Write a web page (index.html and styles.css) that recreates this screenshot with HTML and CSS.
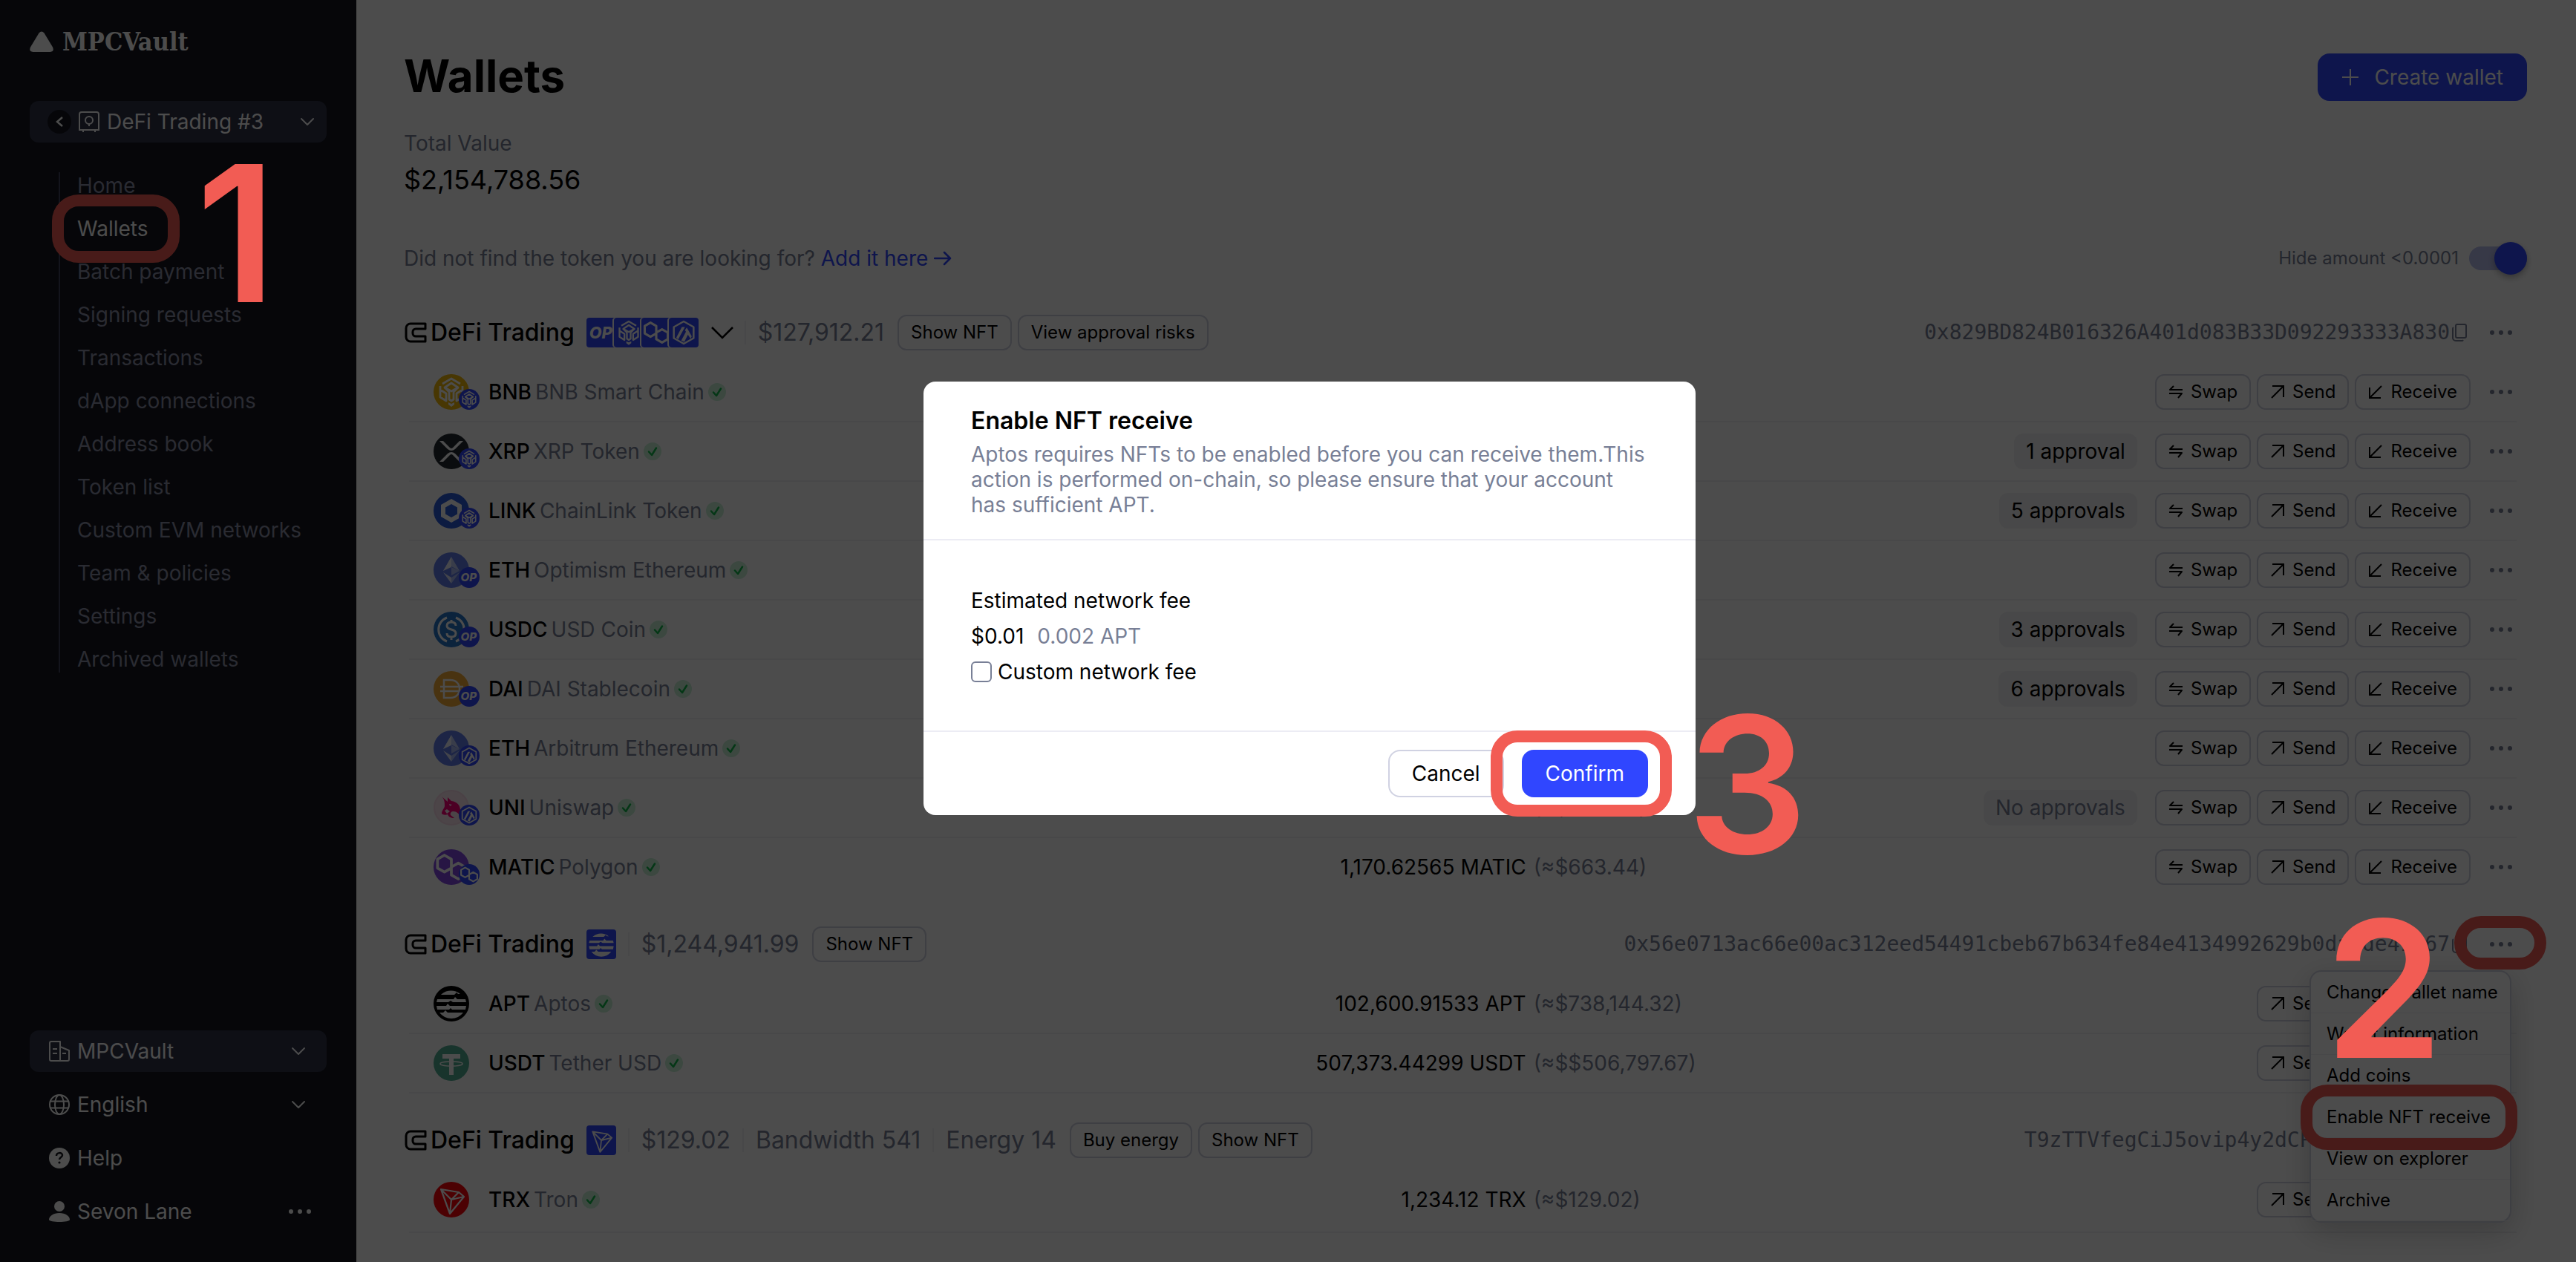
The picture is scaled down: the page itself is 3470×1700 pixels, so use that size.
FILE: index.html
```html
<!DOCTYPE html>
<html lang="en">
<head>
<meta charset="utf-8">
<meta name="viewport" content="width=device-width, initial-scale=1">
<title>Wallets – MPCVault</title>
<link rel="stylesheet" href="styles.css">
</head>
<body>
<svg class="sprite" aria-hidden="true">
  <symbol id="chev" viewBox="0 0 20 12"><path d="M2 2l8 8 8-8" fill="none" stroke="currentColor" stroke-width="2" stroke-linecap="round" stroke-linejoin="round"/></symbol>
  <symbol id="dots" viewBox="0 0 32 8"><circle cx="4" cy="4" r="3" fill="currentColor"/><circle cx="16" cy="4" r="3" fill="currentColor"/><circle cx="28" cy="4" r="3" fill="currentColor"/></symbol>
  <symbol id="purse" viewBox="0 0 30 28"><path d="M28 2H8a6 6 0 0 0-6 6v12a6 6 0 0 0 6 6h20v-7H15a4 4 0 0 1-4-4v-2a4 4 0 0 1 4-4h13z" fill="none" stroke="currentColor" stroke-width="3" stroke-linejoin="round"/></symbol>
  <symbol id="check" viewBox="0 0 24 24"><circle cx="12" cy="12" r="12" fill="#c8f2d8"/><path d="M7 12.500l4 4.500 6-9.500" fill="none" stroke="#12b84c" stroke-width="2.500" stroke-linecap="round" stroke-linejoin="round"/></symbol>
  <symbol id="swap" viewBox="0 0 20 20"><path d="M19 7H2l5-5M1 12h17l-5 6" fill="none" stroke="currentColor" stroke-width="2" stroke-linejoin="round"/></symbol>
  <symbol id="send" viewBox="0 0 20 20"><path d="M2 18L18 2M3 2h15v15" fill="none" stroke="currentColor" stroke-width="2"/></symbol>
  <symbol id="receive" viewBox="0 0 20 20"><path d="M18 2L2 18M2 4v14h15" fill="none" stroke="currentColor" stroke-width="2"/></symbol>
  <symbol id="copy" viewBox="0 0 22 26"><path d="M8 2h10a2 2 0 0 1 2 2v14a2 2 0 0 1-2 2H8a2 2 0 0 1-2-2V4a2 2 0 0 1 2-2zM3 6a2 2 0 0 0-1 2v12a4 4 0 0 0 4 4h8a2 2 0 0 0 2-1" fill="none" stroke="currentColor" stroke-width="2"/></symbol>

  <symbol id="g-bnb" viewBox="0 0 48 48"><g fill="none" stroke="currentColor" stroke-width="2.800" stroke-linejoin="round"><path d="M12 13l12-7 12 7"/><path d="M15 18l9-6 9 6-9 5z"/><path d="M9 16v15l8 5V26l-8-5M39 16v15l-8 5V26l8-5"/><path d="M15 18l6 6v10l3 2 3-2V24l6-6"/></g><path d="M20 38l4 2 4-2v3l-4 3-4-3z" fill="currentColor"/></symbol>
  <symbol id="g-poly" viewBox="6 6 36 36"><path d="M24 25l-7 4-7-4v-9l7-4 7 4v16l7 4 7-4v-8l-7-4-7 4" fill="none" stroke="currentColor" stroke-width="2.800" stroke-linejoin="round"/></symbol>
  <symbol id="g-arb" viewBox="0 0 48 48"><path d="M24 6l16 9v18l-16 9-16-9V15z" fill="none" stroke="currentColor" stroke-width="3" stroke-linejoin="round"/><path d="M12 32l9-17h5L15 35zM20 37l8-15 3 5-6 12zM29 16l8 14-2 4-9-14z" fill="currentColor"/></symbol>
  <symbol id="g-op" viewBox="0 0 48 48"><text x="23" y="33" text-anchor="middle" class="op-text" fill="currentColor">OP</text></symbol>
  <symbol id="g-apt" viewBox="0 0 48 48"><path d="M11 11a20 20 0 0 1 25 0l-3 0-2-2-3 3H10zM5 18h22l2-3 3 3h11l1 4H26l-3-2-3 2H4zM4 27h13l2-3 3 3h22l-1 5H25l-2-2-2 2H5zM8 36h5l3-3 3 3h21a20 20 0 0 1-32 0z" fill="currentColor"/></symbol>
  <symbol id="g-tron" viewBox="0 0 48 48"><path d="M10 10l24 4 7 6-19 23zM10 10l14 14 17-4M24 24l-2 19M24 24l10-10" fill="none" stroke="currentColor" stroke-width="2.200" stroke-linejoin="round"/></symbol>

  <symbol id="c-bnb" viewBox="0 0 48 48"><circle cx="24" cy="24" r="24" fill="#f0b90b"/></symbol>
  <symbol id="c-xrp" viewBox="0 0 48 48"><circle cx="24" cy="24" r="24" fill="#23292f"/><path d="M8 10h5l9 9q2 2 4 0l9-9h5L29 21q-5 4-10 0zM8 38h5l9-9q2-2 4 0l9 9h5L29 27q-5-4-10 0z" fill="#fff"/></symbol>
  <symbol id="c-link" viewBox="0 0 48 48"><circle cx="24" cy="24" r="24" fill="#2a5ada"/><path d="M24 8l14 8v16l-14 8-14-8V16zm0 7l-8 4.500v9l8 4.500 8-4.500v-9z" fill="#fff"/></symbol>
  <symbol id="c-eth" viewBox="0 0 48 48"><circle cx="24" cy="24" r="24" fill="#627eea"/><path d="M24 6v13l11 6z" fill="#fff" opacity=".6"/><path d="M24 6L13 25l11-6zM24 34v8l11-15zM24 31l11-6-11-5z" fill="#fff" opacity=".45"/><path d="M24 6L13 25l11-5zM24 42v-8l-11-7z" fill="#fff" opacity=".8"/></symbol>
  <symbol id="c-usdc" viewBox="0 0 48 48"><circle cx="24" cy="24" r="24" fill="#2775ca"/><path d="M18 8a17 17 0 0 0 0 32M30 8a17 17 0 0 1 0 32M30 19c0-3-2-5-6-5s-6 2-6 5 2 4 6 5 6 2 6 5-2 5-6 5-6-2-6-5M24 11v3M24 34v4" fill="none" stroke="#fff" stroke-width="3"/></symbol>
  <symbol id="c-dai" viewBox="0 0 48 48"><circle cx="24" cy="24" r="24" fill="#f5ac37"/><path d="M14 12h9c7 0 12 5 12 12s-5 12-12 12h-9zM9 21h31M9 27h31" fill="none" stroke="#fff" stroke-width="2.500"/></symbol>
  <symbol id="c-uni" viewBox="0 0 48 48"><circle cx="24" cy="24" r="23" fill="#fde8f2" stroke="#fbdcea" stroke-width="2"/><path d="M11 9l8 7 0-6 5 5c8 1 12 6 12 13v8c-2-4-5-7-9-7-3 0-5 2-4 5l5 4c-5 0-8-2-9-5-3 1-6 1-8-1 0-4 3-6 4-10 0-5 0-9-4-13z" fill="#ff007a"/><path d="M21 19l4 1-3 2zM15 28l3-2 4 3-4 3z" fill="#fde8f2"/></symbol>
  <symbol id="c-matic" viewBox="0 0 48 48"><circle cx="24" cy="24" r="24" fill="#8247e5"/></symbol>
  <symbol id="c-apt" viewBox="0 0 48 48"><circle cx="24" cy="24" r="24" fill="#000"/></symbol>
  <symbol id="c-usdt" viewBox="0 0 48 48"><circle cx="24" cy="24" r="24" fill="#53ae94"/><path d="M12 12h24v6h-9v22h-6V18h-9z" fill="#fff"/><ellipse cx="24" cy="25" rx="15" ry="3" fill="none" stroke="#fff" stroke-width="1.500"/></symbol>
  <symbol id="c-trx" viewBox="0 0 48 48"><circle cx="24" cy="24" r="24" fill="#ff060a"/></symbol>
</svg>

<div class="app">
  <aside class="sidebar">
    <a class="brand" href="#">
      <svg class="brand-mark" viewBox="0 0 32 28"><path d="M12.500 2.500Q16-1.500 19.500 2.500L31 21.500Q33.500 27.500 27.500 28H4.500Q-1.500 27.500 1 21.500z" fill="currentColor"/></svg>
      <span>MPCVault</span>
    </a>

    <div class="picker picker-vault">
      <button class="back" aria-label="Back"><svg viewBox="0 0 12 16"><path d="M10 2L3 8l7 6" fill="none" stroke="currentColor" stroke-width="2.500"/></svg></button>
      <svg class="picker-icon" viewBox="0 0 28 28"><g fill="none" stroke="currentColor" stroke-width="2"><path d="M4 1h20a3 3 0 0 1 3 3v21H1V4a3 3 0 0 1 3-3z"/><circle cx="14" cy="12" r="5"/><path d="M14 17v3"/></g><path d="M5 25h2v3H5zM21 25h2v3h-2z" fill="currentColor"/></svg>
      <select aria-label="Vault"><option>DeFi Trading #3</option></select>
      <svg class="chev"><use href="#chev"/></svg>
    </div>

    <nav class="nav" aria-label="Vault">
      <a href="#">Home</a>
      <a href="#" class="current" aria-current="page">Wallets<span class="ring ring-nav"></span><span class="step step-1">1</span></a>
      <a href="#">Batch payment</a>
      <a href="#">Signing requests</a>
      <a href="#">Transactions</a>
      <a href="#">dApp connections</a>
      <a href="#">Address book</a>
      <a href="#">Token list</a>
      <a href="#">Custom EVM networks</a>
      <a href="#">Team &amp; policies</a>
      <a href="#">Settings</a>
      <a href="#">Archived wallets</a>
    </nav>

    <div class="account">
      <div class="picker picker-org">
        <svg class="picker-icon" viewBox="0 0 28 28"><g fill="none" stroke="currentColor" stroke-width="2" stroke-linejoin="round"><path d="M3 1h12v26H3a2 2 0 0 1-2-2V3a2 2 0 0 1 2-2zM15 8l12 5v12a2 2 0 0 1-2 2H15"/><path d="M5 11h6M5 17h6M18 17h5"/></g></svg>
        <select aria-label="Organization"><option>MPCVault</option></select>
        <svg class="chev"><use href="#chev"/></svg>
      </div>
      <div class="picker">
        <svg class="picker-icon" viewBox="0 0 28 28"><g fill="none" stroke="currentColor" stroke-width="2"><circle cx="14" cy="14" r="13"/><ellipse cx="14" cy="14" rx="6" ry="13"/><path d="M2 9.500h24M2 18.500h24"/></g></svg>
        <select aria-label="Language"><option>English</option></select>
        <svg class="chev"><use href="#chev"/></svg>
      </div>
      <a class="picker" href="#">
        <svg class="picker-icon" viewBox="0 0 28 28"><circle cx="14" cy="14" r="14" fill="currentColor"/><path d="M10 11c0-5 8-5 8-1 0 3-4 3-4 6" fill="none" stroke="#14171e" stroke-width="2.500"/><circle cx="14" cy="20" r="1.600" fill="#14171e"/></svg>
        <span>Help</span>
      </a>
      <div class="picker">
        <svg class="picker-icon" viewBox="0 0 28 28"><circle cx="14" cy="7" r="7" fill="currentColor"/><path d="M14 16c8 0 14 4 14 9 0 4-28 4-28 0 0-5 6-9 14-9z" fill="currentColor"/></svg>
        <span class="grow">Sevon Lane</span>
        <button class="more-user" aria-label="Account menu"><svg class="dots"><use href="#dots"/></svg></button>
      </div>
    </div>
  </aside>

  <main class="main">
    <header class="title-row">
      <h1>Wallets</h1>
      <button class="primary create"><svg viewBox="0 0 24 24"><path d="M12 1v22M1 12h22" stroke="currentColor" stroke-width="2"/></svg>Create wallet</button>
    </header>
    <p class="total-label">Total Value</p>
    <p class="total">$2,154,788.56</p>

    <div class="tools">
      <p>Did not find the token you are looking for? <a href="#">Add it here <svg viewBox="0 0 24 20"><path d="M1 10h21M14 2l8 8-8 8" fill="none" stroke="currentColor" stroke-width="2.500" stroke-linecap="round" stroke-linejoin="round"/></svg></a></p>
      <label class="switch">Hide amount &lt;0.0001<input type="checkbox" role="switch" checked></label>
    </div>

    <div class="wallets">
      <section class="wallet">
        <header class="wallet-head">
          <svg class="purse"><use href="#purse"/></svg><h2>DeFi Trading</h2>
          <div class="chains">
            <svg class="chain"><use href="#g-op"/></svg>
            <svg class="chain"><use href="#g-bnb"/></svg>
            <svg class="chain"><use href="#g-poly"/></svg>
            <svg class="chain"><use href="#g-arb"/></svg>
          </div>
          <button class="expand" aria-label="Show networks"><svg viewBox="0 0 32 18"><path d="M2 2l14 14L30 2" fill="none" stroke="currentColor" stroke-width="2.500"/></svg></button>
          <span class="stat">$127,912.21</span>
          <button class="small">Show NFT</button>
          <button class="small">View approval risks</button>
          <span class="address">0x829BD824B016326A401d083B33D092293333A830</span>
          <button class="copy" aria-label="Copy address"><svg><use href="#copy"/></svg></button>
          <button class="more" aria-label="More"><svg class="dots"><use href="#dots"/></svg></button>
        </header>
        <table>
          <colgroup><col class="col-asset"><col class="col-fiat"><col class="col-actions"></colgroup>
          <tbody>
          <tr>
            <td><div class="asset"><span class="coin"><svg><use href="#c-bnb"/></svg><svg class="glyph"><use href="#g-bnb"/></svg><svg class="badge"><use href="#g-bnb"/></svg></span><b>BNB</b><span>BNB Smart Chain</span><svg class="ok"><use href="#check"/></svg></div></td>
            <td></td>
            <td><div class="actions"><button class="small"><svg><use href="#swap"/></svg>Swap</button><button class="small"><svg><use href="#send"/></svg>Send</button><button class="small"><svg><use href="#receive"/></svg>Receive</button><button class="more" aria-label="More"><svg class="dots"><use href="#dots"/></svg></button></div></td>
          </tr>
          <tr>
            <td><div class="asset"><span class="coin"><svg><use href="#c-xrp"/></svg><svg class="badge"><use href="#g-bnb"/></svg></span><b>XRP</b><span>XRP Token</span><svg class="ok"><use href="#check"/></svg></div></td>
            <td></td>
            <td><div class="actions"><span class="approvals">1 approval</span><button class="small"><svg><use href="#swap"/></svg>Swap</button><button class="small"><svg><use href="#send"/></svg>Send</button><button class="small"><svg><use href="#receive"/></svg>Receive</button><button class="more" aria-label="More"><svg class="dots"><use href="#dots"/></svg></button></div></td>
          </tr>
          <tr>
            <td><div class="asset"><span class="coin"><svg><use href="#c-link"/></svg><svg class="badge"><use href="#g-bnb"/></svg></span><b>LINK</b><span>ChainLink Token</span><svg class="ok"><use href="#check"/></svg></div></td>
            <td></td>
            <td><div class="actions"><span class="approvals">5 approvals</span><button class="small"><svg><use href="#swap"/></svg>Swap</button><button class="small"><svg><use href="#send"/></svg>Send</button><button class="small"><svg><use href="#receive"/></svg>Receive</button><button class="more" aria-label="More"><svg class="dots"><use href="#dots"/></svg></button></div></td>
          </tr>
          <tr>
            <td><div class="asset"><span class="coin"><svg><use href="#c-eth"/></svg><svg class="badge"><use href="#g-op"/></svg></span><b>ETH</b><span>Optimism Ethereum</span><svg class="ok"><use href="#check"/></svg></div></td>
            <td></td>
            <td><div class="actions"><button class="small"><svg><use href="#swap"/></svg>Swap</button><button class="small"><svg><use href="#send"/></svg>Send</button><button class="small"><svg><use href="#receive"/></svg>Receive</button><button class="more" aria-label="More"><svg class="dots"><use href="#dots"/></svg></button></div></td>
          </tr>
          <tr>
            <td><div class="asset"><span class="coin"><svg><use href="#c-usdc"/></svg><svg class="badge"><use href="#g-op"/></svg></span><b>USDC</b><span>USD Coin</span><svg class="ok"><use href="#check"/></svg></div></td>
            <td></td>
            <td><div class="actions"><span class="approvals">3 approvals</span><button class="small"><svg><use href="#swap"/></svg>Swap</button><button class="small"><svg><use href="#send"/></svg>Send</button><button class="small"><svg><use href="#receive"/></svg>Receive</button><button class="more" aria-label="More"><svg class="dots"><use href="#dots"/></svg></button></div></td>
          </tr>
          <tr>
            <td><div class="asset"><span class="coin"><svg><use href="#c-dai"/></svg><svg class="badge"><use href="#g-op"/></svg></span><b>DAI</b><span>DAI Stablecoin</span><svg class="ok"><use href="#check"/></svg></div></td>
            <td></td>
            <td><div class="actions"><span class="approvals">6 approvals</span><button class="small"><svg><use href="#swap"/></svg>Swap</button><button class="small"><svg><use href="#send"/></svg>Send</button><button class="small"><svg><use href="#receive"/></svg>Receive</button><button class="more" aria-label="More"><svg class="dots"><use href="#dots"/></svg></button></div></td>
          </tr>
          <tr>
            <td><div class="asset"><span class="coin"><svg><use href="#c-eth"/></svg><svg class="badge"><use href="#g-arb"/></svg></span><b>ETH</b><span>Arbitrum Ethereum</span><svg class="ok"><use href="#check"/></svg></div></td>
            <td></td>
            <td><div class="actions"><button class="small"><svg><use href="#swap"/></svg>Swap</button><button class="small"><svg><use href="#send"/></svg>Send</button><button class="small"><svg><use href="#receive"/></svg>Receive</button><button class="more" aria-label="More"><svg class="dots"><use href="#dots"/></svg></button></div></td>
          </tr>
          <tr>
            <td><div class="asset"><span class="coin"><svg><use href="#c-uni"/></svg><svg class="badge"><use href="#g-arb"/></svg></span><b>UNI</b><span>Uniswap</span><svg class="ok"><use href="#check"/></svg><span class="amount">112 UNI</span></div></td>
            <td class="fiat">(≈$663.44)</td>
            <td><div class="actions"><span class="approvals none">No approvals</span><button class="small"><svg><use href="#swap"/></svg>Swap</button><button class="small"><svg><use href="#send"/></svg>Send</button><button class="small"><svg><use href="#receive"/></svg>Receive</button><button class="more" aria-label="More"><svg class="dots"><use href="#dots"/></svg></button></div></td>
          </tr>
          <tr class="no-line">
            <td><div class="asset"><span class="coin"><svg><use href="#c-matic"/></svg><svg class="glyph"><use href="#g-poly"/></svg><svg class="badge"><use href="#g-poly"/></svg></span><b>MATIC</b><span>Polygon</span><svg class="ok"><use href="#check"/></svg><span class="amount">1,170.62565 MATIC</span></div></td>
            <td class="fiat">(≈$663.44)</td>
            <td><div class="actions"><button class="small"><svg><use href="#swap"/></svg>Swap</button><button class="small"><svg><use href="#send"/></svg>Send</button><button class="small"><svg><use href="#receive"/></svg>Receive</button><button class="more" aria-label="More"><svg class="dots"><use href="#dots"/></svg></button></div></td>
          </tr>
          </tbody>
        </table>
      </section>

      <section class="wallet">
        <header class="wallet-head">
          <svg class="purse"><use href="#purse"/></svg><h2>DeFi Trading</h2>
          <div class="chains"><svg class="chain"><use href="#g-apt"/></svg></div>
          <span class="stat">$1,244,941.99</span>
          <button class="small">Show NFT</button>
          <span class="address">0x56e0713ac66e00ac312eed54491cbeb67b634fe84e4134992629b0da1de41567</span>
          <button class="copy" aria-label="Copy address"><svg><use href="#copy"/></svg></button>
          <div class="more-wrap">
            <button class="more" aria-label="More" aria-expanded="true"><svg class="dots"><use href="#dots"/></svg></button>
            <span class="ring ring-more"></span>
            <ul class="menu">
              <li><button>Change wallet name</button></li>
              <li><button>Wallet information</button></li>
              <li><button>Add coins</button></li>
              <li><button>Enable NFT receive</button><span class="ring ring-item"></span></li>
              <li><button>View on explorer</button></li>
              <li><button>Archive</button></li>
            </ul>
            <span class="step step-2">2</span>
          </div>
        </header>
        <table>
          <colgroup><col class="col-asset"><col class="col-fiat"><col class="col-actions"></colgroup>
          <tbody>
          <tr>
            <td><div class="asset"><span class="coin"><svg><use href="#c-apt"/></svg><svg class="glyph"><use href="#g-apt"/></svg></span><b>APT</b><span>Aptos</span><svg class="ok"><use href="#check"/></svg><span class="amount">102,600.91533 APT</span></div></td>
            <td class="fiat">(≈$738,144.32)</td>
            <td><div class="actions"><button class="small"><svg><use href="#send"/></svg>Send</button><button class="small"><svg><use href="#receive"/></svg>Receive</button><button class="more" aria-label="More"></button></div></td>
          </tr>
          <tr>
            <td><div class="asset"><span class="coin"><svg><use href="#c-usdt"/></svg></span><b>USDT</b><span>Tether USD</span><svg class="ok"><use href="#check"/></svg><span class="amount">507,373.44299 USDT</span></div></td>
            <td class="fiat">(≈$$506,797.67)</td>
            <td><div class="actions"><button class="small"><svg><use href="#send"/></svg>Send</button><button class="small"><svg><use href="#receive"/></svg>Receive</button><button class="more" aria-label="More"></button></div></td>
          </tr>
          </tbody>
        </table>
      </section>

      <section class="wallet">
        <header class="wallet-head">
          <svg class="purse"><use href="#purse"/></svg><h2>DeFi Trading</h2>
          <div class="chains"><svg class="chain"><use href="#g-tron"/></svg></div>
          <span class="stat">$129.02</span>
          <span class="stat">Bandwidth 541</span>
          <span class="stat">Energy 14</span>
          <button class="small">Buy energy</button>
          <button class="small">Show NFT</button>
          <span class="address">T9zTTVfegCiJ5ovip4y2dCP1mKq8sWz3Ha</span>
          <button class="copy" aria-label="Copy address"><svg><use href="#copy"/></svg></button>
          <button class="more" aria-label="More"></button>
        </header>
        <table>
          <colgroup><col class="col-asset"><col class="col-fiat"><col class="col-actions"></colgroup>
          <tbody>
          <tr class="last">
            <td><div class="asset"><span class="coin"><svg><use href="#c-trx"/></svg><svg class="glyph"><use href="#g-tron"/></svg></span><b>TRX</b><span>Tron</span><svg class="ok"><use href="#check"/></svg><span class="amount">1,234.12 TRX</span></div></td>
            <td class="fiat">(≈$129.02)</td>
            <td><div class="actions"><button class="small"><svg><use href="#send"/></svg>Send</button><button class="small"><svg><use href="#receive"/></svg>Receive</button><button class="more" aria-label="More"></button></div></td>
          </tr>
          </tbody>
        </table>
      </section>
    </div>
  </main>
</div>

<div class="backdrop">
  <div class="dialog" role="dialog" aria-modal="true" aria-labelledby="dialog-title">
    <header class="dialog-head">
      <h2 id="dialog-title">Enable NFT receive</h2>
      <p>Aptos requires NFTs to be enabled before you can receive them.This action is performed on-chain, so please ensure that your account has sufficient APT.</p>
    </header>
    <div class="dialog-body">
      <p>Estimated network fee</p>
      <p class="fee">$0.01<span>0.002 APT</span></p>
      <label class="custom"><input type="checkbox">Custom network fee</label>
    </div>
    <footer class="dialog-foot">
      <button class="secondary">Cancel</button>
      <div class="confirm-wrap">
        <button class="primary">Confirm</button>
        <span class="ring ring-confirm"></span>
      </div>
    </footer>
    <span class="step step-3">3</span>
  </div>
</div>
</body>
</html>
```
FILE: styles.css
```css
:root {
  --ink: #000;
  --muted: #787f96;
  --line: #f0f0f3;
  --border: #d0d2e2;
  --blue: #3046ff;
  --red: #f25c54;
  --side: #14171e;
  --side-box: #2f3249;
}

* { box-sizing: border-box; }

body {
  margin: 0;
  background: #fff;
  color: var(--ink);
  font: 400 28px/34px Inter, "Liberation Sans", sans-serif;
}

h1, h2, p, ul { margin: 0; padding: 0; }
a { color: inherit; text-decoration: none; }
svg { display: block; flex: none; overflow: hidden; }
button, select, input { font: inherit; color: inherit; margin: 0; }
button { border: 0; padding: 0; background: none; }
.sprite { display: none; }
.grow { flex: 1; }

.app { display: flex; min-height: 100vh; }

/* Sidebar */
.sidebar {
  flex: none;
  width: 480px;
  padding: 36px 40px 40px;
  display: flex;
  flex-direction: column;
  background: var(--side);
  color: #fff;
}
.brand {
  display: flex;
  align-items: center;
  gap: 12px;
  font: 700 34px/40px "DejaVu Serif Condensed", "DejaVu Serif", serif;
}
.brand-mark { width: 32px; height: 28px; }
.picker {
  display: flex;
  align-items: center;
  gap: 10px;
  height: 56px;
  padding: 0 20px 0 26px;
  border-radius: 12px;
}
.picker-vault { margin-top: 60px; padding: 0 16px 0 24px; background: var(--side-box); }
.picker-org { background: var(--side-box); }
.picker-icon { width: 28px; height: 28px; }
.picker select {
  flex: 1;
  min-width: 0;
  border: 0;
  padding: 0;
  appearance: none;
  background: none;
}
.picker .chev { width: 20px; height: 12px; margin-right: 8px; }
.picker-vault .chev { margin-right: 0; }
.back {
  display: grid;
  place-items: center;
  width: 32px;
  height: 32px;
  border-radius: 50%;
  background: var(--side);
}
.back svg { width: 12px; height: 16px; }
.nav {
  display: flex;
  flex-direction: column;
  align-items: flex-start;
  gap: 22px;
  margin: 40px 0 auto 39px;
  padding-left: 23px;
  border-left: 2px solid #41445f;
  color: #8c8fa7;
  line-height: 36px;
}
.nav a { position: relative; }
.nav .current { color: #fff; }
.account { display: flex; flex-direction: column; gap: 16px; }

/* Page head */
.main { flex: 1; min-width: 0; padding: 72px 66px 24px 64px; }
.title-row { display: flex; justify-content: space-between; align-items: flex-start; height: 64px; }
h1 { font-size: 60px; line-height: 60px; font-weight: 700; }
.primary, .secondary {
  display: flex;
  align-items: center;
  justify-content: center;
  height: 64px;
  padding: 0 32px;
  border-radius: 16px;
}
.primary { background: var(--blue); color: #fff; }
.secondary { padding: 0 30px; border: 2px solid var(--border); background: #fff; }
.create { gap: 20px; }
.create svg { width: 24px; height: 24px; }
.total-label { margin-top: 40px; color: var(--muted); }
.total { margin-top: 10px; font-size: 36px; line-height: 44px; }
.tools {
  display: flex;
  justify-content: space-between;
  align-items: center;
  height: 44px;
  margin-top: 62px;
  color: var(--muted);
}
.tools a { color: var(--blue); }
.tools a svg { display: inline-block; width: 24px; height: 20px; }
.switch { display: flex; align-items: center; gap: 14px; font-size: 24px; }
.switch input {
  display: grid;
  align-items: center;
  width: 78px;
  height: 44px;
  appearance: none;
}
.switch input::before,
.switch input::after { content: ""; grid-area: 1 / 1; }
.switch input::before { height: 32px; border-radius: 16px; background: #b8beee; }
.switch input::after {
  justify-self: end;
  width: 44px;
  height: 44px;
  border-radius: 50%;
  background: var(--blue);
  box-shadow: 0 4px 8px rgba(0, 0, 0, .3);
}

/* Wallets */
.wallets { display: flex; flex-direction: column; gap: 24px; margin: 39px 14px 0 0; }
.wallet-head { display: flex; align-items: center; height: 80px; padding-bottom: 2px; }
.purse { width: 30px; height: 28px; margin-left: 1px; }
.wallet-head h2 { margin-left: 5px; font-size: 32px; line-height: 40px; font-weight: 500; }
.chains { display: flex; margin: 0 16px; }
.chain {
  width: 40px;
  height: 40px;
  border-radius: 4px;
  background: var(--blue);
  color: #fff;
}
.chain + .chain { margin-left: -3px; box-shadow: -2px 0 0 #fff; }
.op-text { font: italic 800 26px Inter, "Liberation Sans", sans-serif; }
.expand svg { width: 32px; height: 18px; }
.expand { margin-right: 14px; }
.stat {
  border-left: 2px solid var(--line);
  padding: 0 16px;
  font-size: 32px;
  line-height: 32px;
  color: var(--muted);
}
.small {
  display: flex;
  align-items: center;
  gap: 10px;
  height: 48px;
  padding: 0 16px;
  border: 2px solid var(--border);
  border-radius: 12px;
  font-size: 24px;
  white-space: nowrap;
}
.stat + .small { margin-left: 2px; }
.small + .small { margin-left: 8px; }
.small svg { width: 20px; height: 20px; }
.address {
  margin-left: auto;
  color: var(--muted);
  font: 400 28px/34px "DejaVu Sans Mono", "Liberation Mono", monospace;
}
.copy { margin: 0 24px 0 2px; color: var(--muted); }
.copy svg { width: 22px; height: 26px; }
.more { display: grid; place-items: center; width: 42px; height: 40px; color: var(--muted); }
.dots { width: 32px; height: 8px; }

table {
  width: calc(100% - 7px);
  margin-left: 7px;
  border-collapse: separate;
  border-spacing: 0;
  table-layout: fixed;
}
.col-asset { width: 53%; }
.col-fiat { width: 13%; }
td { height: 80px; padding: 0; border-bottom: 2px solid var(--line); }
.no-line td { border-color: transparent; }
.last td { height: 84px; padding-bottom: 4px; }
.asset { display: flex; align-items: center; padding-left: 33px; gap: 5px; color: var(--muted); }
.asset b { color: var(--ink); font-weight: 500; }
.asset .amount { margin-left: auto; color: var(--ink); }
.coin { position: relative; width: 62px; height: 48px; margin-right: 7px; }
.coin svg { width: 48px; height: 48px; }
.coin .glyph { position: absolute; top: 0; left: 0; color: #fff; }
.coin .badge {
  position: absolute;
  right: 0;
  bottom: 0;
  width: 28px;
  height: 28px;
  border-radius: 50%;
  background: var(--blue);
  color: #fff;
}
.ok { width: 24px; height: 24px; }
.fiat { padding-left: 10px; color: var(--muted); }
.actions { display: flex; justify-content: flex-end; align-items: center; }
.actions .more { margin-left: 20px; }
.approvals {
  height: 48px;
  margin-right: 24px;
  padding: 0 16px;
  border-radius: 12px;
  background: #f1f1f3;
  line-height: 48px;
}
.approvals.none { color: var(--muted); }

/* Menu */
.more-wrap { position: relative; }
.menu {
  position: absolute;
  z-index: 10;
  top: 55px;
  right: 7px;
  width: 272px;
  border: 2px solid var(--border);
  border-radius: 16px;
  background: #fff;
  box-shadow: 0 12px 40px rgba(0, 0, 0, .2);
  list-style: none;
  font-size: 24px;
}
.menu li { position: relative; height: 56px; border-bottom: 1px solid var(--line); }
.menu button { width: 100%; height: 100%; padding-left: 21px; text-align: left; white-space: nowrap; }

/* Dialog */
.backdrop {
  position: fixed;
  z-index: 20;
  inset: 0;
  display: grid;
  place-items: center;
  padding: 0 0 88px 58px;
  background: rgba(0, 0, 0, .7);
}
.dialog { position: relative; width: 1040px; border-radius: 16px; background: #fff; }
.dialog-head { padding: 33px 64px 29px; border-bottom: 2px solid #ececf4; }
.dialog-head h2 { font-size: 32px; line-height: 40px; font-weight: 600; }
.dialog-head p { margin-top: 8px; color: var(--muted); }
.dialog-body { display: flex; flex-direction: column; gap: 14px; padding: 64px 64px 62px; }
.fee span { margin-left: 18px; color: var(--muted); }
.custom { display: flex; align-items: center; gap: 8px; }
.custom input {
  width: 28px;
  height: 28px;
  appearance: none;
  border: 2px solid var(--muted);
  border-radius: 6px;
}
.dialog-foot {
  display: flex;
  justify-content: flex-end;
  gap: 24px;
  padding: 24px 64px 24px;
  border-top: 2px solid #ececf4;
}
.confirm-wrap { position: relative; }

/* Guide marks */
.ring { position: absolute; border: 16px solid var(--red); border-radius: 36px; pointer-events: none; }
.ring-nav { left: -34px; top: -28px; width: 172px; height: 92px; }
.ring-more { z-index: 12; left: -42px; top: -18px; width: 124px; height: 72px; }
.ring-item { left: -14px; top: -16px; width: 292px; height: 88px; }
.ring-confirm { inset: -26px -32px -26px -42px; }
.step {
  position: absolute;
  z-index: 30;
  color: var(--red);
  font-size: 256px;
  line-height: 256px;
  font-weight: 600;
  pointer-events: none;
}
.step-1 { left: 160px; top: -104px; }
.step-2 { right: 99px; top: -48px; }
.step-3 { right: -151px; bottom: -87px; }
```
